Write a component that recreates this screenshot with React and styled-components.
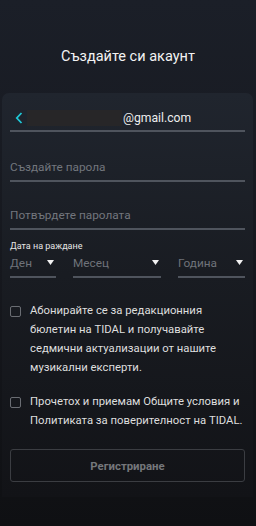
import React from "react";
import styled, { createGlobalStyle } from "styled-components";

const Global = createGlobalStyle`
  html, body { margin: 0; padding: 0; background: #101114; }
  * { box-sizing: border-box; }
  body { font-family: Roboto, "Noto Sans", "Liberation Sans", sans-serif; }
`;

const Page = styled.div`
  width: 256px;
  height: 526px;
  display: flex;
  flex-direction: column;
  background: linear-gradient(180deg, #1b1f28 0%, #16181e 50%, #0f1013 100%);
  overflow: hidden;
`;

const Header = styled.div`
  height: 93px;
  padding-top: 48px;
  text-align: center;
  color: #f2f2f2;
  font-size: 14.5px;
  line-height: 18px;
`;

const Panel = styled.div`
  margin: 0 3px 0 2px;
  height: 404px;
  border-radius: 7px 7px 0 0;
  background: linear-gradient(180deg, #20252e 0%, #191c22 45%, #121317 100%);
  padding: 0 8px;
  display: flex;
  flex-direction: column;
`;

const EmailField = styled.div`
  margin-top: 15px;
  height: 24px;
  display: flex;
  align-items: center;
  border-bottom: 2px solid #4f545d;
  padding-bottom: 2px;
`;

const Back = styled.svg`
  width: 8px;
  height: 12px;
  margin-left: 5px;
  flex: none;
`;

const Redacted = styled.div`
  width: 95px;
  height: 16px;
  margin-left: 4px;
  background: #272628;
  flex: none;
`;

const EmailText = styled.span`
  margin-left: 1px;
  color: #ececec;
  font-size: 12.2px;
`;

const Field = styled.div`
  margin-top: ${(p) => p.$mt}px;
  height: 26px;
  display: flex;
  align-items: center;
  border-bottom: 2px solid #4f545d;
  padding-bottom: 3px;
  color: #72767d;
  font-size: 11.8px;
`;

const Label = styled.div`
  margin-top: 10px;
  font-size: 9px;
  line-height: 12px;
  color: #e6e6e6;
`;

const SelectRow = styled.div`
  display: flex;
  gap: 17px;
`;

const Select = styled.div`
  width: ${(p) => p.$w}px;
  height: 26px;
  display: flex;
  align-items: center;
  justify-content: space-between;
  border-bottom: 2px solid #4f545d;
  padding: 0 2px 3px 0;
  color: #6f737a;
  font-size: 11.8px;
`;

const Arrow = styled.svg`
  width: 7px;
  height: 5px;
`;

const CheckRow = styled.div`
  margin-top: ${(p) => p.$mt}px;
  display: flex;
  align-items: flex-start;
`;

const Box = styled.div`
  width: 11px;
  height: 11px;
  margin-top: 5px;
  border: 1.5px solid #6a6d73;
  border-radius: 2px;
  flex: none;
`;

const CheckText = styled.div`
  margin-left: 9px;
  width: 216px;
  color: #dedede;
  font-size: 11.3px;
  line-height: 19px;
`;

const Button = styled.div`
  margin-top: 19px;
  height: 33px;
  border: 1px solid #3b3d42;
  border-radius: 3px;
  display: flex;
  align-items: center;
  justify-content: center;
  color: #75777b;
  font-size: 11.4px;
  font-weight: 700;
`;

const Caret = () => (
  <Arrow viewBox="0 0 7 5">
    <path d="M0 0 L7 0 L3.5 5 Z" fill="#f2f2f2" />
  </Arrow>
);

export default function App() {
  return (
    <>
      <Global />
      <Page>
        <Header>Създайте си акаунт</Header>
        <Panel>
          <EmailField>
            <Back viewBox="0 0 8 12">
              <path d="M6.5 1 L1.8 6 L6.5 11" fill="none" stroke="#1fc7d6" strokeWidth="1.8" />
            </Back>
            <Redacted />
            <EmailText>@gmail.com</EmailText>
          </EmailField>
          <Field $mt={24}>Създайте парола</Field>
          <Field $mt={22}>Потвърдете паролата</Field>
          <Label>Дата на раждане</Label>
          <SelectRow>
            <Select $w={46}>
              Ден <Caret />
            </Select>
            <Select $w={88}>
              Месец <Caret />
            </Select>
            <Select $w={67}>
              Година <Caret />
            </Select>
          </SelectRow>
          <CheckRow $mt={23}>
            <Box />
            <CheckText>
              Абонирайте се за редакционния бюлетин на TIDAL и получавайте седмични актуализации от нашите музикални експерти.
            </CheckText>
          </CheckRow>
          <CheckRow $mt={15}>
            <Box />
            <CheckText>
              Прочетох и приемам Общите условия и Политиката за поверителност на TIDAL.
            </CheckText>
          </CheckRow>
          <Button>Регистриране</Button>
        </Panel>
      </Page>
    </>
  );
}
